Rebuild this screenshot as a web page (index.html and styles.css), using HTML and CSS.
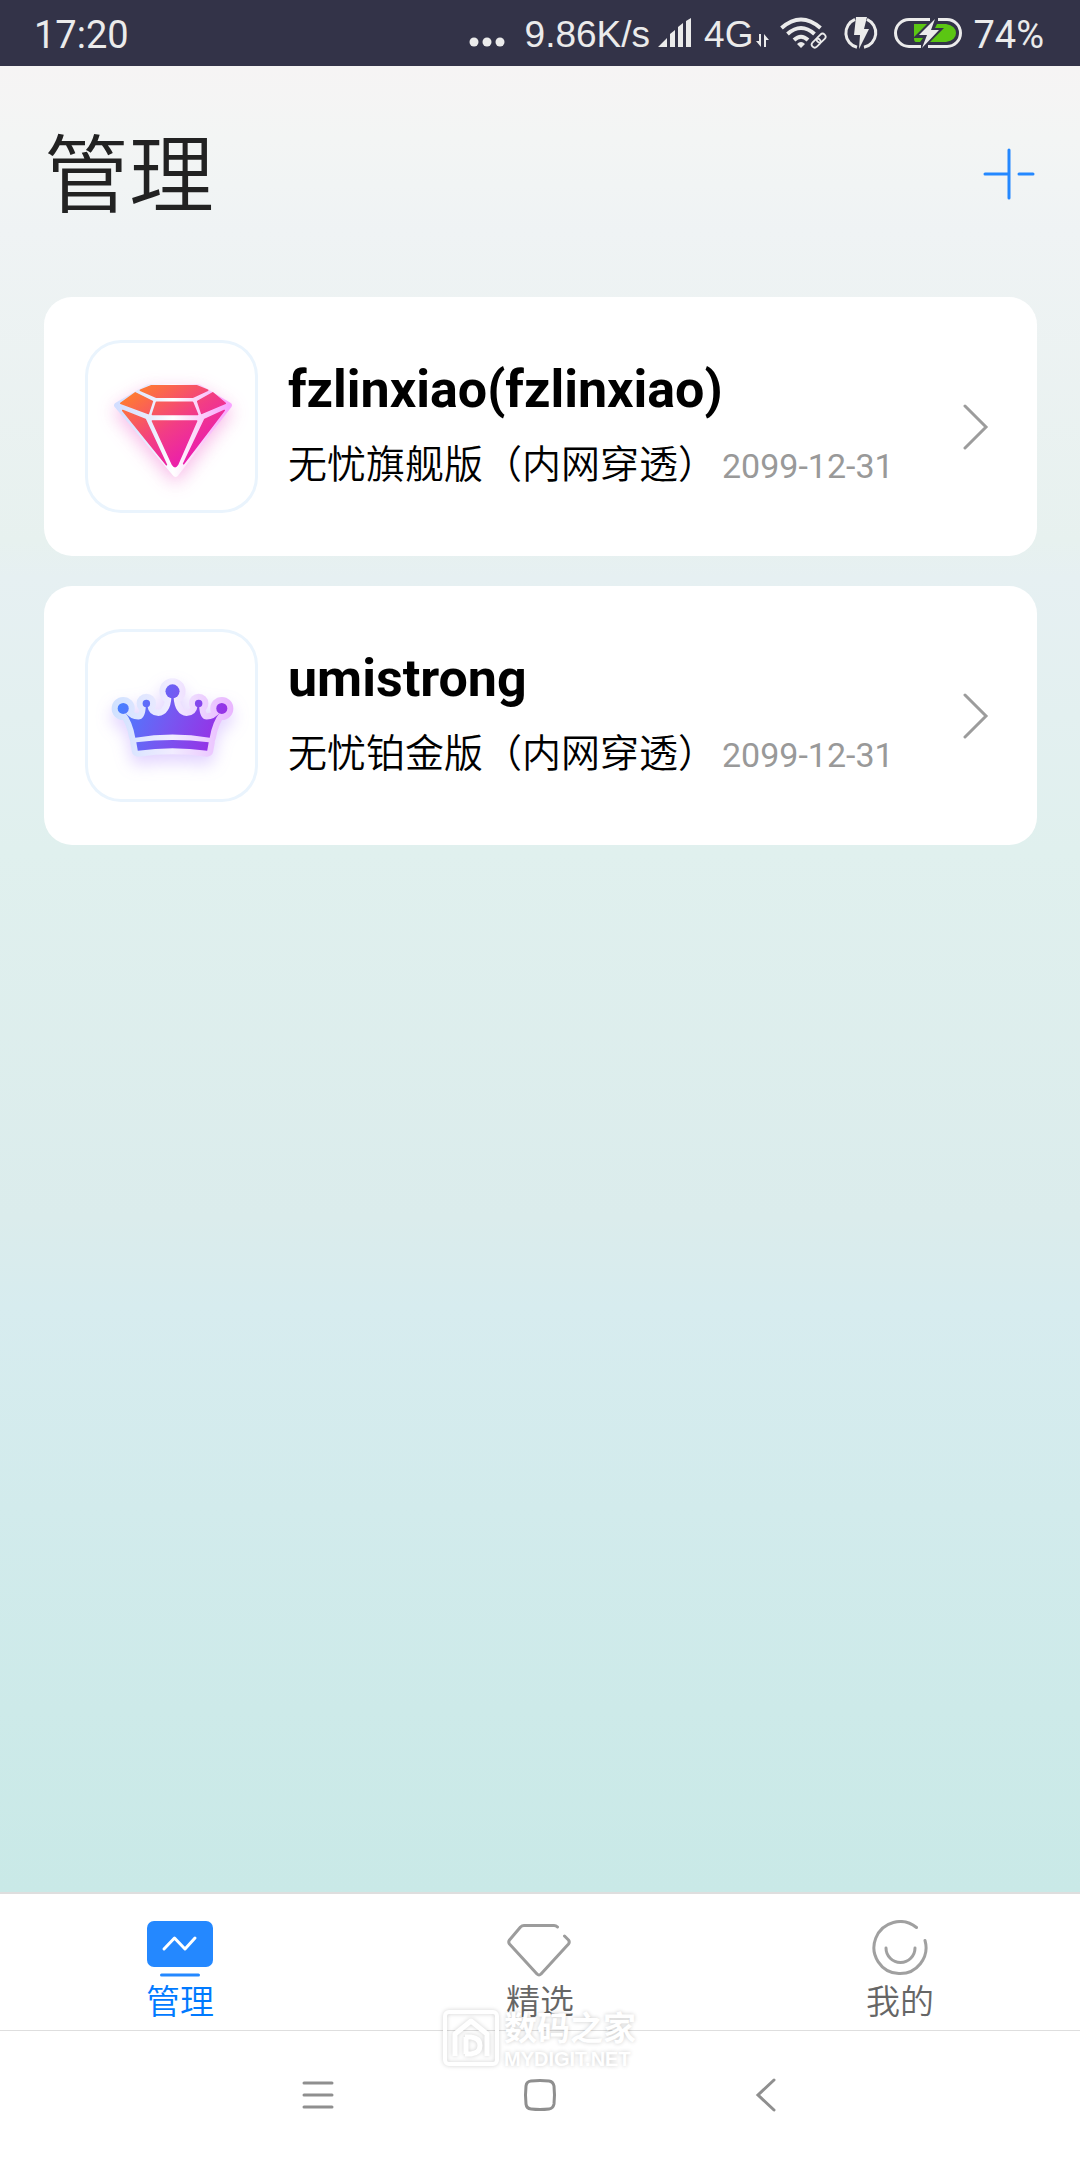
FILE: index.html
```
<!DOCTYPE html>
<html lang="zh-CN">
<head>
    <meta charset="UTF-8">
    <meta name="viewport" content="width=device-width, initial-scale=1.0">
    <title>管理</title>
    <link rel="stylesheet" href="styles.css">
</head>
<body>

    <!-- Status bar -->
    <div class="status-bar">
        <span class="clock">17:20</span>
        <div class="status-right">
            <svg class="dots" width="36" height="34" viewBox="0 0 36 34" fill="currentColor">
                <circle cx="5" cy="26" r="4.5"/><circle cx="18" cy="26" r="4.5"/><circle cx="31" cy="26" r="4.5"/>
            </svg>
            <span class="net">9.86K/s</span>
            <svg class="signal" width="34" height="34" viewBox="0 0 34 34" fill="currentColor">
                <path d="M0 31L9 22V31zM12 31V18L17 14V31zM20 31V11L25 7V31zM28 31V5L33 2V31z"/>
            </svg>
            <span class="net">4G</span>
            <svg class="updown" width="14" height="34" viewBox="0 0 14 34" fill="currentColor">
                <path d="M3 18H5V31L0 25H3zM8 31V18L13 24H10V31z"/>
            </svg>
            <svg class="wifi" width="48" height="34" viewBox="0 0 48 34" fill="none" stroke="currentColor">
                <path d="M1.500 12Q21-5 40.500 12" stroke-width="4"/>
                <path d="M7.500 18Q21 6 34.500 18" stroke-width="4"/>
                <path d="M14 24Q21 17.500 28 24" stroke-width="4"/>
                <path d="M21 32L17 28Q21 24 25 28z" fill="currentColor" stroke="none"/>
                <g stroke-width="1.800" transform="rotate(-45 39 25)">
                    <rect x="30.500" y="21.500" width="10" height="6" rx="3"/>
                    <rect x="37.500" y="21.500" width="10" height="6" rx="3"/>
                </g>
            </svg>
            <svg class="flash" width="34" height="34" viewBox="0 0 34 34">
                <path d="M11 3.300A14.800 14.800 0 0 0 13 31.300M23 3.300A14.800 14.800 0 0 1 20 31.300" fill="none" stroke="currentColor" stroke-width="3"/>
                <path d="M12 1H23L20 13H25L15 33L16 19H10z" fill="currentColor"/>
            </svg>
            <svg class="battery" width="68" height="34" viewBox="0 0 68 34">
                <path d="M36 3.500H15A13.500 13.500 0 0 0 15 30.500H27M44 3.500H53A13.500 13.500 0 0 1 53 30.500H34" fill="none" stroke="currentColor" stroke-width="3"/>
                <path d="M20 8H33L20 21zM43 8H52Q62 10 62 17T52 26H36L50 12H41zM20 22H29L26 26H22Q20 26 20 22z" fill="#5bc613"/>
                <path d="M41 3L25 19H33L28 32L45 14H37z" fill="currentColor"/>
            </svg>
            <span class="percent">74%</span>
        </div>
    </div>

    <!-- Main content -->
    <main class="main-content">
        <header class="header">
            <h1>管理</h1>
            <button class="add-btn" aria-label="添加">
                <svg width="52" height="52" viewBox="0 0 52 52" fill="none" stroke="#2488ff" stroke-width="3" stroke-linecap="round">
                    <path d="M26 2V50M2 26H26M36 26H50"/>
                </svg>
            </button>
        </header>

        <div class="card-list">
            <a class="card" href="#">
                <span class="card-icon">
                    <svg viewBox="0 0 172 172">
                        <defs>
                            <linearGradient id="gemFill" gradientUnits="userSpaceOnUse" x1="52" y1="50" x2="104" y2="122">
                                <stop offset="0" stop-color="#ff7a33"/>
                                <stop offset=".55" stop-color="#f23d85"/>
                                <stop offset="1" stop-color="#ea1bb0"/>
                            </linearGradient>
                            <linearGradient id="gemEdge" x1="0" x2="1">
                                <stop offset="0" stop-color="#d2deff"/>
                                <stop offset=".3" stop-color="#e9edff"/>
                                <stop offset=".5" stop-color="#ffffff"/>
                                <stop offset=".7" stop-color="#fbd9fa"/>
                                <stop offset="1" stop-color="#f8a3ff"/>
                            </linearGradient>
                        </defs>
                        <path class="gem-base" d="M32 65L63 47H113L143 65L90 133z" fill="url(#gemEdge)" stroke="url(#gemEdge)" stroke-width="6" stroke-linejoin="round"/>
                        <path d="M55 50L66 45.500H111L122 50L107 57H71zM35.500 63L50 52.500L67 61L63 73zM71 62H107L112 74H67zM112 61L127 52.500L139.500 63L116 73zM37.500 70L60 79L81 124zM67 80.500H111L92 124Q89.500 128 87 124zM138.500 70L119 79L98 123z" fill="url(#gemFill)" stroke="url(#gemFill)" stroke-width="1.500" stroke-linejoin="round"/>
                    </svg>
                </span>
                <span class="card-body">
                    <strong class="card-title">fzlinxiao(fzlinxiao)</strong>
                    <span class="card-info">无忧旗舰版（内网穿透）<time datetime="2099-12-31">2099-12-31</time></span>
                </span>
                <svg class="arrow" width="26" height="46" viewBox="0 0 26 46">
                    <path d="M2 2L23 23L2 44"/>
                </svg>
            </a>

            <a class="card" href="#">
                <span class="card-icon">
                    <svg viewBox="0 0 172 172">
                        <defs>
                            <linearGradient id="crownFill" gradientUnits="userSpaceOnUse" x1="36" y1="76" x2="128" y2="112">
                                <stop offset="0" stop-color="#4a7dff"/>
                                <stop offset=".5" stop-color="#7658f1"/>
                                <stop offset="1" stop-color="#9632e6"/>
                            </linearGradient>
                            <linearGradient id="crownEdge" gradientUnits="userSpaceOnUse" x1="26" y1="90" x2="148" y2="90">
                                <stop offset="0" stop-color="#cfe1ff"/>
                                <stop offset=".5" stop-color="#f1ecff"/>
                                <stop offset="1" stop-color="#e9b5ff"/>
                            </linearGradient>
                            <g id="crownShape">
                                <circle cx="38" cy="79" r="5.500"/>
                                <circle cx="61" cy="74" r="3.700"/>
                                <circle cx="87" cy="62" r="7"/>
                                <circle cx="113" cy="74" r="3.700"/>
                                <circle cx="136" cy="79" r="5.500"/>
                                <path d="M39 82Q45 90 53 90Q60 90 60.500 76H62Q63 86 73 86.500Q85 85 86 67H88Q89 85 101 86.500Q111 86 112 76H113.500Q114 90 121 90Q129 90 135 82Q127 91 124 108Q87 102 50 108Q47 91 39 82z"/>
                                <path d="M51 112.500Q87 108 123 112.500L121.500 121Q87 116 52.500 121z"/>
                            </g>
                        </defs>
                        <g class="crown-base">
                            <use href="#crownShape" fill="url(#crownEdge)" stroke="url(#crownEdge)" stroke-width="12" stroke-linejoin="round"/>
                        </g>
                        <use href="#crownShape" fill="url(#crownFill)"/>
                    </svg>
                </span>
                <span class="card-body">
                    <strong class="card-title">umistrong</strong>
                    <span class="card-info">无忧铂金版（内网穿透）<time datetime="2099-12-31">2099-12-31</time></span>
                </span>
                <svg class="arrow" width="26" height="46" viewBox="0 0 26 46">
                    <path d="M2 2L23 23L2 44"/>
                </svg>
            </a>
        </div>
    </main>

    <!-- Tab bar -->
    <nav class="tab-bar">
        <a class="tab active" href="#">
            <svg width="66" height="58" viewBox="0 0 66 58" fill="none">
                <rect x="0" y="1" width="66" height="46" rx="7" fill="#2488ff"/>
                <path d="M17 29L27.500 18L38 29L48 18" stroke="#fff" stroke-width="3" stroke-linecap="round" stroke-linejoin="round"/>
                <path d="M14.500 55H51.500" stroke="#2488ff" stroke-width="3" stroke-linecap="round"/>
            </svg>
            <span>管理</span>
        </a>
        <a class="tab" href="#">
            <svg width="66" height="58" viewBox="0 0 66 58" fill="none" stroke="#9c9c9c" stroke-width="3" stroke-linecap="round" stroke-linejoin="round">
                <path d="M50.500 7Q49 5.500 47 5.500H17Q15 5.500 13.500 7L2.500 20Q1 22 2.500 24L30 54Q32 56 34 54L61.500 24Q63 22 61.500 20L57.500 16"/>
            </svg>
            <span>精选</span>
        </a>
        <a class="tab" href="#">
            <svg width="66" height="58" viewBox="0 0 66 58" fill="none" stroke="#a0a0a0" stroke-width="3" stroke-linecap="round">
                <path d="M49.500 7.500A26 26 0 1 0 58 20.500M19 28A14.500 14.500 0 0 0 48 28"/>
            </svg>
            <span>我的</span>
        </a>
    </nav>

    <!-- System keys -->
    <div class="system-bar">
        <button aria-label="菜单">
            <svg width="34" height="34" viewBox="0 0 34 34"><path d="M3 5H31M3 17H31M3 29H31"/></svg>
        </button>
        <button aria-label="主页">
            <svg width="34" height="34" viewBox="0 0 34 34"><path d="M8 3Q17 2 26 3Q30 3.500 31 8Q32 17 31 26Q30 30.500 26 31Q17 32 8 31Q3.500 30.500 3 26Q2 17 3 8Q3.500 3.500 8 3z"/></svg>
        </button>
        <button aria-label="返回">
            <svg width="34" height="34" viewBox="0 0 34 34"><path d="M29 2L13 17L29 32"/></svg>
        </button>

        <div class="watermark">
            <svg width="56" height="56" viewBox="0 0 56 56" fill="none" stroke="#fff" stroke-width="4" stroke-linejoin="round">
                <rect x="2" y="2" width="52" height="52" rx="4"/>
                <path d="M12 46V24L28 11L44 24V46" stroke-width="5"/>
                <path d="M23 27V44M22 27H28Q37 28 37 35.500T28 44H22" stroke-width="5"/>
            </svg>
            <div>
                <p class="mark-name">数码之家</p>
                <p class="mark-site">MYDIGIT.NET</p>
            </div>
        </div>
    </div>

</body>
</html>
```
FILE: styles.css
```
/* Basic Styles */
* {
    box-sizing: border-box;
}

body {
    font-family: Roboto, "Noto Sans CJK SC", sans-serif;
    margin: 0;
    min-height: 100vh;
    display: flex;
    flex-direction: column;
    background-color: #fff;
    color: #000;
}

a {
    color: inherit;
    text-decoration: none;
}

button {
    background: none;
    border: none;
    padding: 0;
    cursor: pointer;
}

svg {
    display: block;
    flex: none;
}

/* Status Bar */
.status-bar {
    background-color: #333348;
    color: #ebebeb;
    height: 66px;
    padding: 0 36px 0 34px;
    display: flex;
    justify-content: space-between;
    align-items: center;
    line-height: 40px;
}

.clock {
    font-size: 38px;
    padding-top: 4px;
}

.status-right {
    display: flex;
    align-items: center;
}

.net {
    font-family: "Liberation Sans", sans-serif;
    font-size: 37px;
    padding-top: 4px;
}

.percent {
    font-size: 38px;
    padding-top: 4px;
}

.dots {
    margin-right: 20px;
}

.signal {
    margin: 0 12px 0 8px;
}

.updown {
    margin: 0 10px 0 3px;
}

.wifi,
.flash {
    margin-right: 16px;
}

.battery {
    margin-right: 11px;
}

/* Main Content */
.main-content {
    flex: 1;
    padding: 0 43px 0 44px;
    background: linear-gradient(#f6f4f4, #f3f5f4 4%, #eff3f4 9%, #e7f1ef 26%, #e6f0f2 28%, #e0f0ee 43%, #dbecec 63%, #d7ecef 68%, #cdeae9 90%, #c9e9e7);
}

.header {
    display: flex;
    justify-content: space-between;
    align-items: center;
    padding: 48px 2px 63px 0;
}

.header h1 {
    margin: 0;
    padding-top: 6px;
    font-size: 85px;
    font-weight: 350;
    line-height: 114px;
    color: #222;
}

/* Cards */
.card-list {
    display: flex;
    flex-direction: column;
    gap: 30px;
}

.card {
    display: flex;
    align-items: center;
    gap: 30px;
    padding: 43px 48px 43px 41px;
    border-radius: 28px;
    background-color: #fff;
}

.card-icon {
    flex: none;
    width: 173px;
    height: 173px;
    border-radius: 36px;
    box-shadow: inset 0 0 0 3px #eaf4fd;
}

.gem-base {
    filter: drop-shadow(0 6px 9px rgba(235, 60, 190, 0.35));
}

.crown-base {
    filter: drop-shadow(0 8px 8px rgba(140, 80, 255, 0.25));
}

.card-body {
    flex: 1;
    display: flex;
    flex-direction: column;
    gap: 16px;
}

.card-title {
    font-size: 52px;
    font-weight: 700;
    line-height: 62px;
}

.card-info {
    font-size: 39px;
    font-weight: 350;
    line-height: 56px;
}

.card-info time {
    margin-left: 5px;
    font-size: 34px;
    font-weight: 400;
    color: #999;
}

.arrow path {
    fill: none;
    stroke: #9c9c9c;
    stroke-width: 3;
    stroke-linecap: round;
}

/* Tab Bar */
.tab-bar {
    display: flex;
    border-top: 2px solid #dedede;
    border-bottom: 1px solid #dedede;
}

.tab {
    flex: 1;
    display: flex;
    flex-direction: column;
    align-items: center;
    gap: 2px;
    padding: 26px 0 6px;
    font-size: 34px;
    font-weight: 350;
    line-height: 44px;
    color: #666;
}

.tab.active {
    color: #007aff;
}

/* System Keys */
.system-bar {
    position: relative;
    display: flex;
    justify-content: center;
    padding: 47px 0 48px;
}

.system-bar button {
    width: 222px;
    display: flex;
    justify-content: center;
}

.system-bar button path {
    fill: none;
    stroke: #8f8f8f;
    stroke-width: 3;
    stroke-linecap: round;
}

/* Watermark over the two bars */
.watermark {
    position: absolute;
    top: -21px;
    left: 50%;
    margin-left: -97px;
    display: flex;
    gap: 5px;
    color: #fff;
    pointer-events: none;
}

.watermark svg {
    filter: drop-shadow(0 0 2px rgba(0, 0, 0, 0.18));
}

.watermark p {
    margin: 0;
    font-weight: 700;
    text-shadow: 0 0 4px rgba(0, 0, 0, 0.2);
}

.mark-name {
    font-size: 33px;
    line-height: 38px;
}

.mark-site {
    font-family: "Liberation Sans", sans-serif;
    font-size: 20px;
    line-height: 22px;
}
```
